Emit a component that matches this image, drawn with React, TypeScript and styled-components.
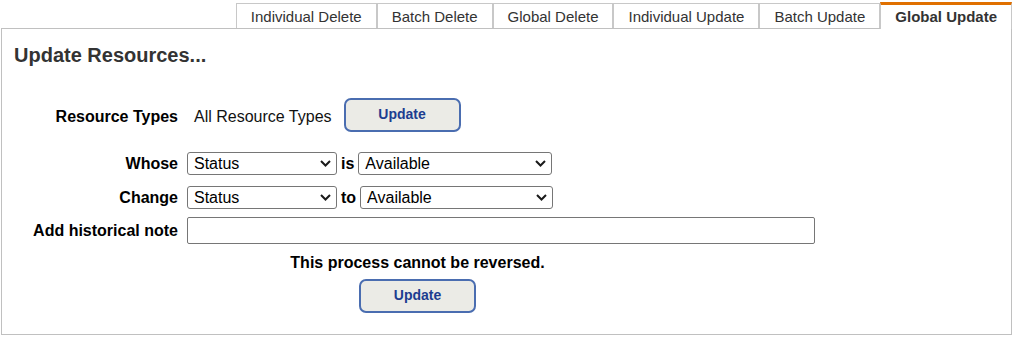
import React from 'react';
import styled, { createGlobalStyle } from 'styled-components';

const GlobalStyle = createGlobalStyle`
  html, body { margin: 0; padding: 0; background: #fff; }
  body { font-family: "Liberation Sans", Arial, sans-serif; color: #000; }
  * { box-sizing: border-box; }
`;

const Page = styled.div`
  width: 1012px;
  padding-left: 1px;
`;

const TabBar = styled.div`
  display: flex;
  justify-content: flex-end;
  align-items: flex-end;
  height: 28px;
`;

const Tab = styled.div<{ $active?: boolean }>`
  position: relative;
  z-index: 1;
  display: flex;
  align-items: center;
  height: ${p => (p.$active ? '27px' : '25px')};
  margin-bottom: ${p => (p.$active ? '-1px' : '0')};
  padding: 0 14px ${p => (p.$active ? '1px' : '0')};
  background: #fff;
  border: 1px solid #c8c8c8;
  border-bottom: none;
  border-top: ${p => (p.$active ? '3px solid #e07000' : '1px solid #c8c8c8')};
  font-size: 15px;
  font-weight: ${p => (p.$active ? 'bold' : 'normal')};
  color: #333;
  white-space: nowrap;
  cursor: pointer;
`;

const Panel = styled.div`
  border: 1px solid #c0c0c0;
  padding: 14px 12px 21px;
`;

const Heading = styled.h2`
  margin: 0;
  font-size: 20px;
  line-height: 24px;
  font-weight: bold;
  color: #333;
`;

const Form = styled.div`
  width: 795px;
  margin-left: 6px;
  display: flex;
  flex-direction: column;
`;

const FieldRow = styled.div<{ $top: number }>`
  display: grid;
  grid-template-columns: 158px 1fr;
  column-gap: 9px;
  align-items: center;
  margin-top: ${p => p.$top}px;
`;

const Label = styled.label<{ $drop?: number }>`
  padding-top: ${p => p.$drop ?? 0}px;
  text-align: right;
  font-size: 16px;
  font-weight: bold;
  color: #000;
  white-space: nowrap;
`;

const Inline = styled.div`
  display: flex;
  align-items: center;
  gap: 4px;
`;

const ValueText = styled.span`
  padding-top: 4px;
  font-size: 16px;
  color: #111;
  margin-left: 7px;
  margin-right: 8px;
`;

const Connector = styled.span`
  font-size: 16px;
  font-weight: bold;
  color: #000;
`;

const SelectWrap = styled.div<{ $w: number }>`
  position: relative;
  width: ${p => p.$w}px;
  height: 23px;
`;

const Select = styled.select`
  appearance: none;
  -webkit-appearance: none;
  width: 100%;
  height: 100%;
  margin: 0;
  padding: 0 24px 0 6px;
  border: 1px solid #767676;
  border-radius: 3px;
  background: #fff;
  font-family: "Liberation Sans", Arial, sans-serif;
  font-size: 16px;
  color: #000;
  outline: none;
`;

const Chevron = styled.svg`
  position: absolute;
  right: 6px;
  top: 8px;
  pointer-events: none;
`;

const NoteInput = styled.input`
  width: 628px;
  height: 27px;
  margin: 0;
  padding: 0 6px;
  border: 1px solid #767676;
  border-radius: 2px;
  font-family: "Liberation Sans", Arial, sans-serif;
  font-size: 16px;
  outline: none;
`;

const Warning = styled.div`
  margin-top: 10px;
  text-align: center;
  font-size: 16px;
  line-height: 18px;
  font-weight: bold;
  color: #000;
`;

const Centered = styled.div`
  display: flex;
  justify-content: center;
  margin-top: 7px;
`;

const UpdateButton = styled.button`
  width: 117px;
  height: 34px;
  margin: 0;
  padding: 0 0 2px;
  border: 2px solid #4a6db0;
  border-radius: 7px;
  background: #ebebe6;
  font-family: "Liberation Sans", Arial, sans-serif;
  font-size: 14px;
  font-weight: bold;
  color: #1c3d90;
  cursor: pointer;
`;

const ChevronIcon = () => (
  <Chevron width="11" height="7" viewBox="0 0 11 7" fill="none">
    <path d="M1 1 L5.5 5.5 L10 1" stroke="#1a1a1a" strokeWidth="2" />
  </Chevron>
);

const Dropdown = ({ w, value, options }: { w: number; value: string; options: string[] }) => (
  <SelectWrap $w={w}>
    <Select defaultValue={value}>
      {options.map(o => (
        <option key={o}>{o}</option>
      ))}
    </Select>
    <ChevronIcon />
  </SelectWrap>
);

const tabs = [
  'Individual Delete',
  'Batch Delete',
  'Global Delete',
  'Individual Update',
  'Batch Update',
  'Global Update',
];

export default function App() {
  const fields = ['Status', 'Condition', 'Location'];
  const values = ['Available', 'Unavailable', 'Retired'];
  return (
    <Page>
      <GlobalStyle />
      <TabBar>
        {tabs.map(t => (
          <Tab key={t} $active={t === 'Global Update'}>
            {t}
          </Tab>
        ))}
      </TabBar>
      <Panel>
        <Heading>Update Resources...</Heading>
        <Form>
          <FieldRow $top={31}>
            <Label $drop={4}>Resource Types</Label>
            <Inline>
              <ValueText>All Resource Types</ValueText>
              <UpdateButton>Update</UpdateButton>
            </Inline>
          </FieldRow>
          <FieldRow $top={20}>
            <Label>Whose</Label>
            <Inline>
              <Dropdown w={150} value="Status" options={fields} />
              <Connector>is</Connector>
              <Dropdown w={194} value="Available" options={values} />
            </Inline>
          </FieldRow>
          <FieldRow $top={11}>
            <Label>Change</Label>
            <Inline>
              <Dropdown w={150} value="Status" options={fields} />
              <Connector>to</Connector>
              <Dropdown w={193} value="Available" options={values} />
            </Inline>
          </FieldRow>
          <FieldRow $top={8}>
            <Label>Add historical note</Label>
            <NoteInput type="text" />
          </FieldRow>
          <Warning>This process cannot be reversed.</Warning>
          <Centered>
            <UpdateButton>Update</UpdateButton>
          </Centered>
        </Form>
      </Panel>
    </Page>
  );
}
